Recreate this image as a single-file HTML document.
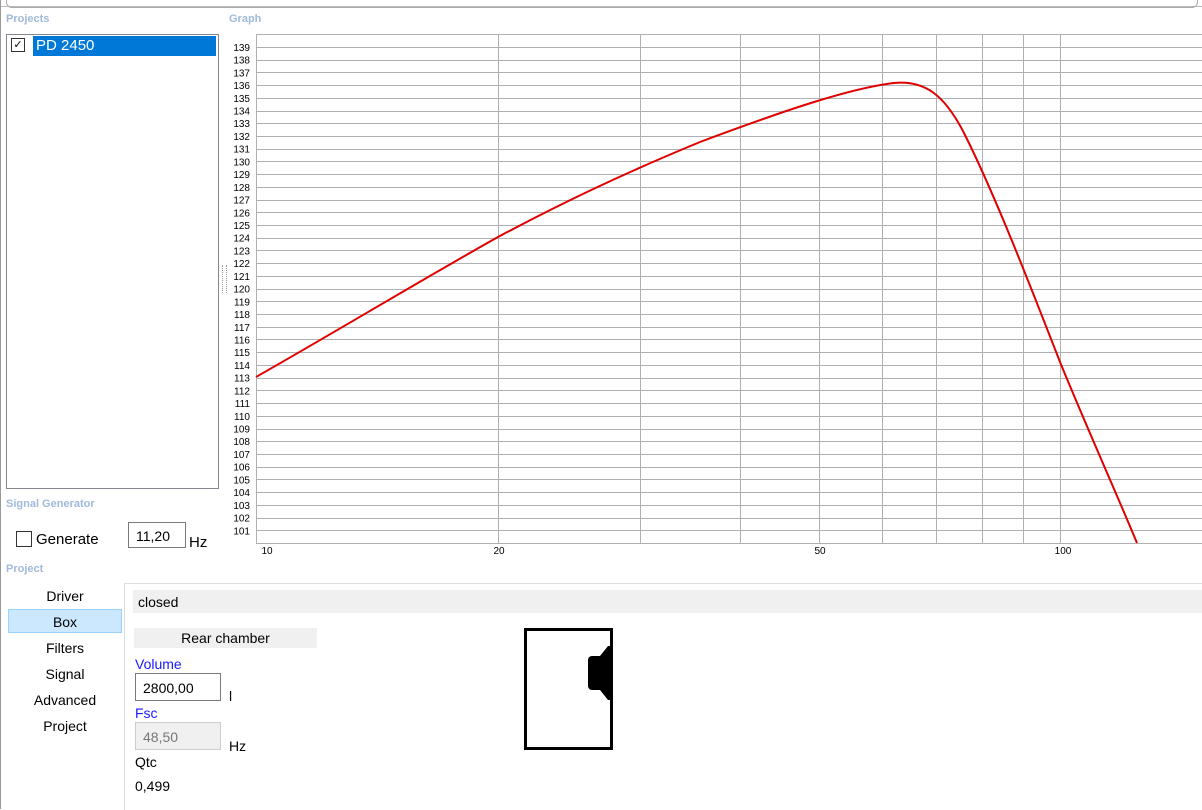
<!DOCTYPE html>
<html><head><meta charset="utf-8"><style>
body{margin:0;width:1202px;height:809px;background:#fff;position:relative;overflow:hidden;font-family:"Liberation Sans",sans-serif;}
.a{position:absolute}
.lbl{color:#9fbadb;font-weight:bold;font-size:11px}
.t{font-size:14px;color:#000}
.nav{position:absolute;left:8px;width:114px;height:24px;line-height:24px;text-align:center;font-size:14px}
</style></head><body>
<div class="a" style="left:0;top:0;width:1202px;height:6px;border-bottom:1px solid #bbb;"></div>
<div class="a" style="left:6px;top:-6px;width:1190px;height:12px;border:1px solid #aaa;border-radius:6px;"></div>
<div class="a lbl" style="left:6px;top:13px">Projects</div>
<div class="a lbl" style="left:229px;top:13px">Graph</div>
<div class="a" style="left:6px;top:34px;width:211px;height:453px;border:1px solid #828790;"></div>
<div class="a" style="left:11px;top:38px;width:12px;height:12px;border:1px solid #333;font-size:11px;line-height:12px;text-align:center">✓</div>
<div class="a" style="left:33px;top:36px;width:183px;height:20px;background:#0078d7;color:#fff;font-size:15px;line-height:20px;padding-left:3px;box-sizing:border-box">PD 2450</div>
<div class="a" style="left:222px;top:265px;width:3px;height:28px;border-left:1px dotted #999;border-right:1px dotted #999"></div>
<svg class="a" style="left:0;top:0" width="1202" height="809">
<g stroke="#b0b0b0" stroke-width="1">
<rect x="256.5" y="34.5" width="950" height="509" fill="none"/>
</g>
<g id="h" stroke="#b0b0b0"></g>
<g stroke="#b0b0b0">
<line x1="498.5" y1="34" x2="498.5" y2="543"/><line x1="640.5" y1="34" x2="640.5" y2="543"/>
<line x1="740.5" y1="34" x2="740.5" y2="543"/><line x1="819.5" y1="34" x2="819.5" y2="543"/>
<line x1="882.5" y1="34" x2="882.5" y2="543"/><line x1="936.5" y1="34" x2="936.5" y2="543"/>
<line x1="982.5" y1="34" x2="982.5" y2="543"/><line x1="1023.5" y1="34" x2="1023.5" y2="543"/>
<line x1="1060.5" y1="34" x2="1060.5" y2="543"/>
</g>
<path d="M256,377 C330,335 430,275 498,237 C560,204 620,175 700,142 C780,112 850,88 894,83 C925,80 945,95 965,135 C995,195 1030,285 1060,362 C1090,435 1115,490 1137,543" fill="none" stroke="#e00000" stroke-width="2"/>
<g font-size="10" fill="#000" font-family="Liberation Sans" text-anchor="middle">
<text x="267" y="554">10</text><text x="499" y="554">20</text><text x="820" y="554">50</text><text x="1063" y="554">100</text>
</g>
<g id="yl" font-size="10" fill="#000" font-family="Liberation Sans" text-anchor="end"></g>
<rect x="525.5" y="629.5" width="86" height="119" fill="#fff" stroke="#000" stroke-width="3"/>
<path d="M592,656 L600,656 L608,646 L611,646 L611,700 L608,700 L600,690 L592,690 Z" fill="#000"/>
<rect x="588" y="656" width="8" height="34" rx="4" fill="#000"/>
</svg>
<script>
var h=document.getElementById('h'),yl=document.getElementById('yl'),s='',t='';
for(var d=101;d<=139;d++){var y=543-(d-100)*12.72;s+='<line x1="256" x2="1202" y1="'+(Math.round(y)+.5)+'" y2="'+(Math.round(y)+.5)+'"/>';t+='<text x="250" y="'+(y+4)+'">'+d+'</text>';}
h.innerHTML=s;yl.innerHTML=t;
</script>
<div class="a lbl" style="left:6px;top:498px">Signal Generator</div>
<div class="a" style="left:16px;top:531px;width:14px;height:14px;border:1px solid #333"></div>
<div class="a t" style="left:36px;top:531px;font-size:15px">Generate</div>
<div class="a t" style="left:128px;top:522px;width:58px;height:26px;border:1px solid #7a7a7a;box-sizing:border-box;padding:5px 7px">11,20</div>
<div class="a t" style="left:189px;top:534px;font-size:15px">Hz</div>
<div class="a lbl" style="left:6px;top:563px">Project</div>
<div class="a" style="left:0;top:0;width:1px;height:809px;background:#999"></div>
<div class="a" style="left:124px;top:583px;width:1078px;height:226px;border-left:1px solid #ddd;border-top:1px solid #ddd"></div>
<div class="nav" style="top:584px">Driver</div>
<div class="nav" style="top:609px;background:#cce8ff;border:1px solid #99d1ff;box-sizing:border-box">Box</div>
<div class="nav" style="top:636px">Filters</div>
<div class="nav" style="top:662px">Signal</div>
<div class="nav" style="top:688px">Advanced</div>
<div class="nav" style="top:714px">Project</div>
<div class="a t" style="left:133px;top:590px;width:1069px;height:23px;background:#f0f0f0;line-height:25px;padding-left:5px;box-sizing:border-box">closed</div>
<div class="a t" style="left:134px;top:628px;width:183px;height:20px;background:#f0f0f0;line-height:21px;text-align:center">Rear chamber</div>
<div class="a t" style="left:135px;top:656px;color:#1a1aff">Volume</div>
<div class="a t" style="left:135px;top:673px;width:86px;height:28px;border:1px solid #7a7a7a;box-sizing:border-box;padding:6px 7px">2800,00</div>
<div class="a t" style="left:229px;top:688px">l</div>
<div class="a t" style="left:135px;top:705px;color:#1a1aff">Fsc</div>
<div class="a t" style="left:135px;top:722px;width:86px;height:28px;border:1px solid #ccc;background:#f0f0f0;color:#777;box-sizing:border-box;padding:6px 7px">48,50</div>
<div class="a t" style="left:229px;top:738px">Hz</div>
<div class="a t" style="left:135px;top:754px">Qtc</div>
<div class="a t" style="left:135px;top:778px">0,499</div>
</body></html>
